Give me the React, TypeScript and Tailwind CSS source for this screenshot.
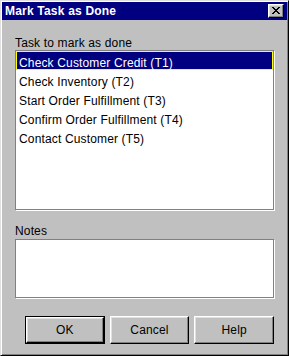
import React from "react";

const rows = [
  "XX....XX",
  ".XX..XX.",
  "..XXXX..",
  "...XX...",
  "..XXXX..",
  ".XX..XX.",
  "XX....XX",
];

function CloseGlyph() {
  const rects: React.ReactElement[] = [];
  rows.forEach((r, y) =>
    r.split("").forEach((c, x) => {
      if (c === "X") rects.push(<rect key={`${x}-${y}`} x={x} y={y} width={1} height={1} fill="#000" />);
    })
  );
  return (
    <svg width="8" height="7" viewBox="0 0 8 7" shapeRendering="crispEdges">
      {rects}
    </svg>
  );
}

const items = [
  "Check Customer Credit (T1)",
  "Check Inventory (T2)",
  "Start Order Fulfillment (T3)",
  "Confirm Order Fulfillment (T4)",
  "Contact Customer (T5)",
];

function Btn({ label, def }: { label: string; def?: boolean }) {
  const inner = (
    <div className="flex-1 flex items-center justify-center border border-t-white border-l-white border-r-black border-b-black shadow-[inset_-1px_-1px_#808080,inset_1px_1px_#dfdfdf] bg-[#c0c0c0] text-black">
      {label}
    </div>
  );
  if (def) {
    return <div className="w-[80px] h-[28px] flex border border-black">{inner}</div>;
  }
  return <div className="w-[80px] h-[28px] flex">{inner}</div>;
}

export default function App() {
  return (
    <div className="w-[289px] h-[356px] bg-[#c0c0c0] border border-t-[#dfdfdf] border-l-[#dfdfdf] border-r-black border-b-black shadow-[inset_1px_1px_#fff,inset_-1px_-1px_#808080] p-[1px] flex flex-col font-['Liberation_Sans',Arial,sans-serif] text-[12px] leading-[14px] tracking-[0.15px] text-black select-none">
      <div className="h-[18px] bg-[#000080] flex items-center pl-[3px]">
        <span className="flex-1 text-white font-bold text-[12px] tracking-[0.2px]">Mark Task as Done</span>
        <div className="w-[16px] h-[14px] mr-[3px] flex items-center justify-center bg-[#c0c0c0] border border-t-white border-l-white border-r-black border-b-black shadow-[inset_-1px_-1px_#808080,inset_1px_1px_#dfdfdf]">
          <div className="mt-[-1px] ml-[-1px] flex">
            <CloseGlyph />
          </div>
        </div>
      </div>
      <div className="flex flex-col px-[13px]">
        <div className="mt-[16px] h-[14px] leading-[14px]">Task to mark as done</div>
        <div className="h-[160px] bg-white border border-[#808080] shadow-[1px_1px_0_#fff] flex flex-col">
          {items.map((it, i) => (
            <div
              key={it}
              className={
                i === 0
                  ? "h-[19px] pt-[3px] leading-[16px] pl-[2px] border border-[#ffff00] bg-[#000080] text-white whitespace-nowrap"
                  : "h-[19px] pt-[3px] leading-[16px] pl-[2px] border border-transparent text-black whitespace-nowrap"
              }
            >
              {it}
            </div>
          ))}
        </div>
        <div className="mt-[14px] h-[14px] leading-[14px]">Notes</div>
        <div className="mt-[1px] h-[59px] bg-white border border-[#808080] shadow-[1px_1px_0_#fff]" />
        <div className="mt-[18px] ml-[10px] flex gap-[5px]">
          <Btn label="OK" def />
          <Btn label="Cancel" />
          <Btn label="Help" />
        </div>
      </div>
    </div>
  );
}
